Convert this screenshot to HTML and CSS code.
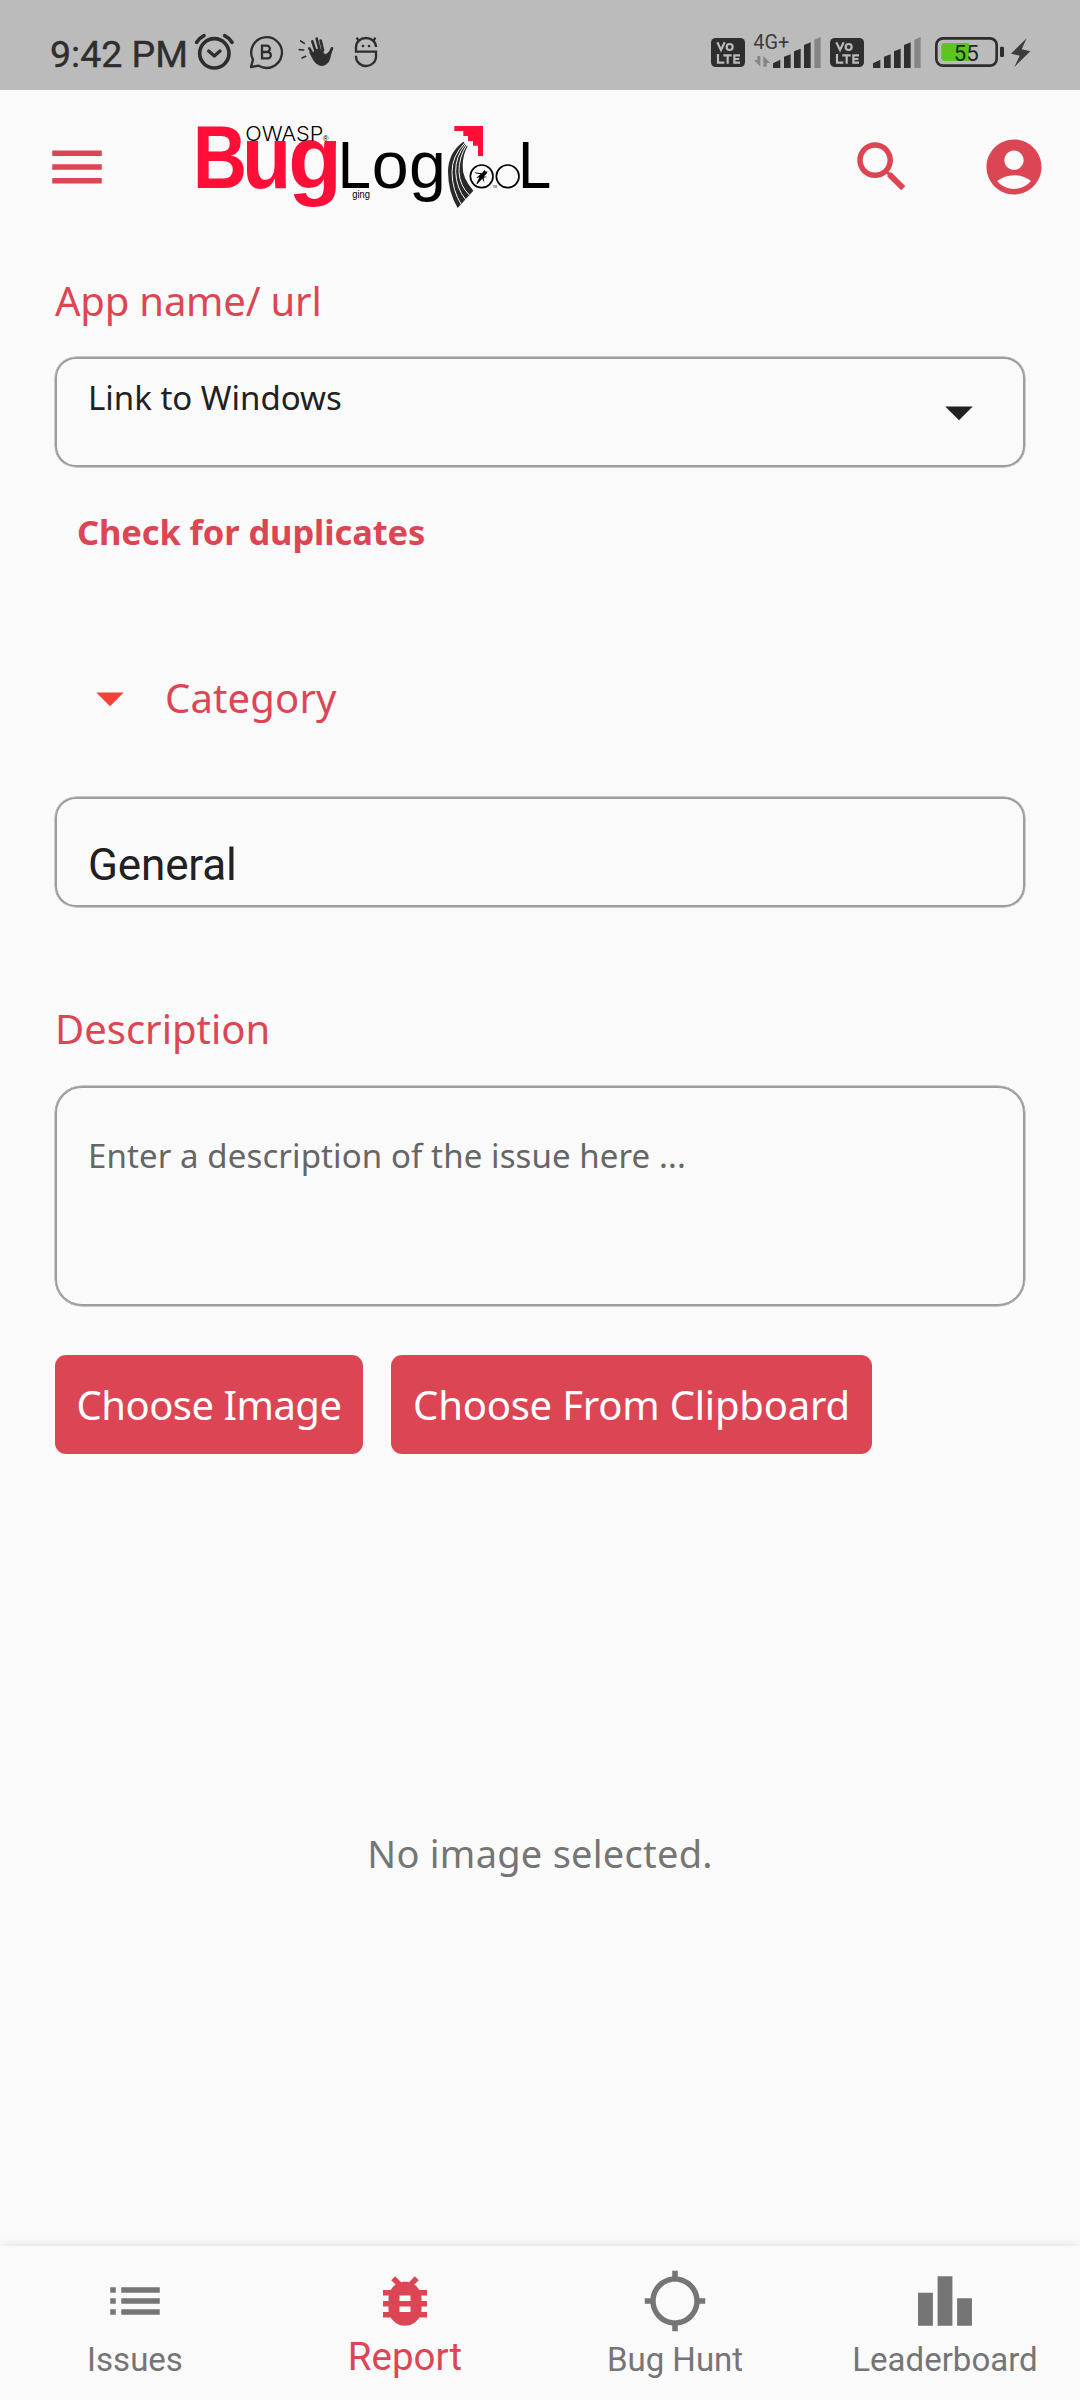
FILE: index.html
```html
<!DOCTYPE html>
<html lang="en">
<head>
<meta charset="utf-8">
<title>BugLog Tool - Report</title>
<link rel="stylesheet" href="styles.css">
</head>
<body>
<div class="status">
  <span class="clock">9:42 PM</span>
  <svg class="w50" viewBox="573 0 150 270" fill="none" stroke="#2e2e2e" stroke-linecap="round"><circle cx="643" cy="160" r="44" stroke-width="11"/><path d="M626 153l17 15 17-15" stroke-width="10" stroke-linejoin="round"/><path d="M590 127q8-13 22-20M696 127q-8-13-22-20" stroke-width="11"/></svg>
  <svg class="w50" viewBox="723 0 150 270" fill="none" stroke="#2e2e2e" stroke-width="7"><path d="M753 201l6-22a46 46 0 1 1 17 18z" stroke-linejoin="round"/><path d="M786 137h14a9 9 0 0 1 0 19h-14zM786 156h17a9 9 0 0 1 0 19h-17z"/></svg>
  <svg class="w50" viewBox="873 0 150 270" fill="none" stroke="#2e2e2e" stroke-linecap="round"><path d="M902 123l11 7M898 149l13 1M906 174l11-5" stroke-width="5"/><path d="M939 164l-11-19M947 155l-10-31M959 150l-9-34M969 151l-7-29M984 172l12-27" stroke-width="8"/><path d="M929 158l12 23q10 16 26 16 17-3 22-19l8-33-14 15-8 4-10-14-18-3-9 14z" fill="#2e2e2e" stroke-width="2"/></svg>
  <svg class="w50 grow" viewBox="1023 0 150 270" fill="none" stroke="#2e2e2e" stroke-width="7"><path d="M1128 141a30 27 0 0 0-60 0v14h60v14a30 28 0 0 1-60 2v-4M1075 121l-5-8M1121 121l5-8"/><g fill="#2e2e2e" stroke="none"><circle cx="1089" cy="138" r="4"/><circle cx="1107" cy="138" r="4"/></g></svg>
  <svg class="w44" viewBox="45 0 132 270"><rect x="63" y="114" width="102" height="87" rx="14" fill="#2e2e2e"/><g fill="none" stroke="#bbb" stroke-width="6.5"><path d="M82 127l11 23 11-23M84 162v26h19M100 166h25M113 166v25M150 166h-17v22h17M133 177h15"/><circle cx="119" cy="141" r="9"/></g></svg>
  <svg class="w75" viewBox="177 0 225 270"><text x="190" y="148" font-size="58" textLength="108" lengthAdjust="spacingAndGlyphs" fill="#3c3c3c">4G+</text><path d="M211 168v32l-19-20h10v-12zM220 200v-32l21 21h-11v11z" fill="#858585"/><g fill="#2e2e2e"><path d="M249 190l22-11v25h-22zM282 170l20-7v41h-20zM312 154l20-8v58h-20zM342 135l20-8v77h-20z"/><path d="M373 119l19-8v93h-19z" fill="#858585"/></g></svg>
  <svg class="w44" viewBox="402 0 132 270"><rect x="420" y="114" width="102" height="87" rx="14" fill="#2e2e2e"/><g transform="translate(357)" fill="none" stroke="#bbb" stroke-width="6.5"><path d="M82 127l11 23 11-23M84 162v26h19M100 166h25M113 166v25M150 166h-17v22h17M133 177h15"/><circle cx="119" cy="141" r="9"/></g></svg>
  <svg class="w57" viewBox="534 0 171 270" fill="#2e2e2e"><path d="M549 190l22-11v25h-22zM582 170l20-7v41h-20zM612 154l20-8v58h-20zM642 135l20-8v77h-20z"/><path d="M673 119l19-8v93h-19z" fill="#858585"/></svg>
  <svg class="w81" viewBox="705 0 243 270"><rect x="739" y="115" width="181" height="82" rx="20" fill="none" stroke="#2e2e2e" stroke-width="8"/><path d="M763 129h74v54h-74q-9 0-9-9v-36q0-9 9-9z" fill="#5ec422"/><rect x="930" y="140" width="12" height="31" rx="4" fill="#2e2e2e"/><text x="791" y="182" font-size="66" textLength="75" lengthAdjust="spacingAndGlyphs" fill="#1d2a17">55</text></svg>
  <svg class="w28" viewBox="948 0 84 270"><path d="M1010 115l-47 46 26 6-16 34 48-47-26-6z" fill="#3c3c3c"/></svg>
</div>
<header class="bar">
  <svg class="icon" viewBox="0 0 24 24"><path d="M3 18h18v-2H3v2zm0-5h18v-2H3v2zm0-7v2h18V6H3z"/></svg>
  <svg class="logo" viewBox="0 0 1140 330">
    <g class="bug"><text transform="translate(38 235) scale(.84 1)">B</text><text transform="translate(186 235) scale(.9 1)">u</text><text transform="translate(325 235) scale(.98 1)">g</text></g>
    <text class="owasp" x="196" y="93" textLength="234" lengthAdjust="spacingAndGlyphs">OWASP</text>
    <text x="428" y="93" font-size="24">®</text>
    <g font-size="199"><text transform="translate(473 235) scale(.9 1)">L</text><text x="575" y="235">o</text><text x="687" y="235">g</text><text transform="translate(1014 235) scale(.9 1)">L</text></g>
    <text x="517" y="263" font-size="34" textLength="53" lengthAdjust="spacingAndGlyphs">ging</text>
    <path d="M823 48h86v90h-15v-31h-15V93h-15V78h-14V63h-27z" fill="#ff0f37"/>
    <path d="M850 95Q805 128 804 184q0 62 29 110l47-52q-34-38-32-76 1-34 15-57z" fill="#292929"/>
    <path d="M854 99q-39 40-38 89 1 53 28 96M857 102q-31 38-30 83 2 50 30 84M860 105q-24 38-23 80 2 42 31 70" fill="none" stroke="#fafafa" stroke-width="3"/>
    <g fill="none" stroke="#000" stroke-width="5"><circle cx="905" cy="199" r="34"/><circle cx="983" cy="199" r="34"/></g>
    <path d="M882 187l24 3 7-10 5 5 5-1-4 8-7 7 9 2-10 2 2 15-6-12-15 16-3-1 9-19-10 3 14-13q-14 1-20-5z"/>
    <text x="938" y="234" font-size="9">TM</text>
  </svg>
  <svg class="icon search" viewBox="0 0 24 24"><path d="M15.5 14h-.79l-.28-.27C15.41 12.59 16 11.11 16 9.5 16 5.91 13.09 3 9.5 3S3 5.91 3 9.5 5.91 16 9.5 16c1.61 0 3.09-.59 4.23-1.57l.27.28v.79l5 4.99L20.49 19l-4.99-5zm-6 0C7.01 14 5 11.99 5 9.5S7.01 5 9.5 5 14 7.01 14 9.5 11.99 14 9.5 14z"/></svg>
  <svg class="icon" viewBox="0 0 24 24"><path d="M12 2C6.48 2 2 6.48 2 12s4.48 10 10 10 10-4.48 10-10S17.52 2 12 2zm0 4c1.93 0 3.5 1.57 3.5 3.5S13.93 13 12 13s-3.5-1.57-3.5-3.5S10.07 6 12 6zm0 14c-2.03 0-4.43-.82-6.14-2.88C7.55 15.8 9.68 15 12 15s4.45.8 6.14 2.12C16.43 19.18 14.03 20 12 20z"/></svg>
</header>
<main class="form">
  <div class="label app">App name/ url</div>
  <div class="field select"><span>Link to Windows</span><svg class="caret" viewBox="0 0 24 24"><path d="M7 10l5 5 5-5z"/></svg></div>
  <div class="check">Check for duplicates</div>
  <div class="label category"><svg class="caret red" viewBox="0 0 24 24"><path d="M7 10l5 5 5-5z"/></svg><span>Category</span></div>
  <div class="field general">General</div>
  <div class="label description">Description</div>
  <div class="field area">Enter a description of the issue here ...</div>
  <div class="buttons"><div class="btn first">Choose Image</div><div class="btn second">Choose From Clipboard</div></div>
  <div class="empty">No image selected.</div>
</main>
<nav class="nav">
  <div class="tab"><svg class="icon" viewBox="0 0 24 24"><path d="M3 13h2v-2H3v2zm0 4h2v-2H3v2zm0-8h2V7H3v2zm4 4h14v-2H7v2zm0 4h14v-2H7v2zM7 7v2h14V7H7z"/></svg><span>Issues</span></div>
  <div class="tab on"><svg class="icon" viewBox="0 0 24 24"><path d="M20 8h-2.81c-.45-.78-1.07-1.45-1.82-1.96L17 4.41 15.59 3l-2.17 2.17C12.96 5.06 12.49 5 12 5s-.96.06-1.41.17L8.41 3 7 4.41l1.62 1.63C7.88 6.55 7.26 7.22 6.81 8H4v2h2.09c-.05.33-.09.66-.09 1v1H4v2h2v1c0 .34.04.67.09 1H4v2h2.81c1.04 1.79 2.97 3 5.19 3s4.15-1.21 5.19-3H20v-2h-2.09c.05-.33.09-.66.09-1v-1h2v-2h-2v-1c0-.34-.04-.67-.09-1H20V8zm-6 8h-4v-2h4v2zm0-4h-4v-2h4v2z"/></svg><span>Report</span></div>
  <div class="tab"><svg class="icon" viewBox="0 0 24 24"><path d="M20.94 11c-.46-4.17-3.77-7.48-7.94-7.94V1h-2v2.06C6.83 3.52 3.52 6.83 3.06 11H1v2h2.06c.46 4.17 3.77 7.48 7.94 7.94V23h2v-2.06c4.17-.46 7.48-3.77 7.94-7.94H23v-2h-2.06zM12 19c-3.87 0-7-3.13-7-7s3.13-7 7-7 7 3.13 7 7-3.13 7-7 7z"/></svg><span>Bug Hunt</span></div>
  <div class="tab"><svg class="icon" viewBox="0 0 24 24"><path d="M2.2 9h5.4v12H2.2zM9.300 3h5.400v18H9.300zM16.400 11h5.400v10h-5.400z"/></svg><span>Leaderboard</span></div>
</nav>
</body>
</html>
```
FILE: styles.css
```css
* { box-sizing: border-box; }
body { margin: 0; width: 1080px; height: 2400px; display: flex; flex-direction: column; background: #fafafa; color: #212121; font-family: Roboto, sans-serif; white-space: nowrap; overflow: hidden; }
svg { display: block; flex: none; }
.status { height: 90px; background: #bbb; display: flex; padding: 0 46px 0 50px; }
.status svg { height: 90px; }
.clock { width: 141px; flex: none; font-size: 37.5px; -webkit-text-stroke: .4px #2e2e2e; line-height: 108px; color: #2e2e2e; }
.w50 { width: 50px; }
.w44 { width: 44px; }
.w75 { width: 75px; }
.w57 { width: 57px; }
.w81 { width: 81px; }
.w28 { width: 28px; }
.grow { margin-right: auto; }
.bar { height: 154px; display: flex; align-items: center; padding: 0 33px 0 44px; }
.icon { width: 66px; height: 66px; fill: #dc4654; }
.logo { width: 380px; height: 110px; margin: -4px auto 0 70px; font-family: "Liberation Sans", sans-serif; }
.bug { fill: #ff0f37; font-size: 269px; font-weight: 700; }
.owasp { font-family: Inter, sans-serif; font-size: 61px; font-weight: 300; }
.search { margin-right: 66px; }
.form { flex: 1; display: flex; flex-direction: column; padding: 27px 55px 0; font-family: "Noto Sans", sans-serif; }
.label { font-size: 40px; line-height: 60px; color: #dc4654; }
.app { letter-spacing: -.2px; }
.field { margin-top: 26px; height: 110px; border: 2px solid #9e9e9e; box-shadow: 0 0 0 .5px #9e9e9e; border-radius: 21px; padding: 15px 31px 0; font-size: 33px; line-height: 48px; }
.select { display: flex; justify-content: space-between; }
.caret { width: 66px; height: 66px; fill: #212121; }
.select .caret { margin-top: 5px; }
.check { margin-top: 41px; padding-left: 22px; font-size: 34.5px; font-weight: 700; letter-spacing: -.12px; line-height: 48px; color: #dc4654; }
.category { margin-top: 112px; display: flex; align-items: center; padding-left: 22px; height: 60px; letter-spacing: .15px; }
.caret.red { fill: #f44336; margin-right: 22px; }
.general { margin-top: 69px; padding-top: 40px; font: 44px/52px Roboto, sans-serif; letter-spacing: -.15px; }
.description { margin-top: 92px; }
.area { margin-top: 27px; height: 220px; border-radius: 27px; padding-top: 44px; letter-spacing: .1px; color: #666; }
.buttons { margin-top: 49px; display: flex; gap: 28px; }
.btn { height: 99px; border-radius: 11px; background: #dc4654; color: #fff; font-size: 40px; line-height: 99px; text-align: center; }
.first { width: 308px; letter-spacing: -.5px; }
.second { width: 481px; letter-spacing: -.2px; }
.empty { flex: 1; display: flex; align-items: center; justify-content: center; padding-top: 6px; font-size: 38px; letter-spacing: .25px; color: #757575; }
.nav { height: 154px; display: flex; padding-top: 22px; box-shadow: 0 0 10px rgba(0,0,0,.12); background: #fafafa; }
.tab { flex: 1; display: flex; flex-direction: column; align-items: center; gap: 6px; font-size: 33px; line-height: 40px; color: #757575; }
.tab .icon { fill: #757575; }
.tab.on { gap: 0; font-size: 38.5px; line-height: 46px; color: #dc4654; }
.tab.on .icon { fill: #dc4654; }
```
